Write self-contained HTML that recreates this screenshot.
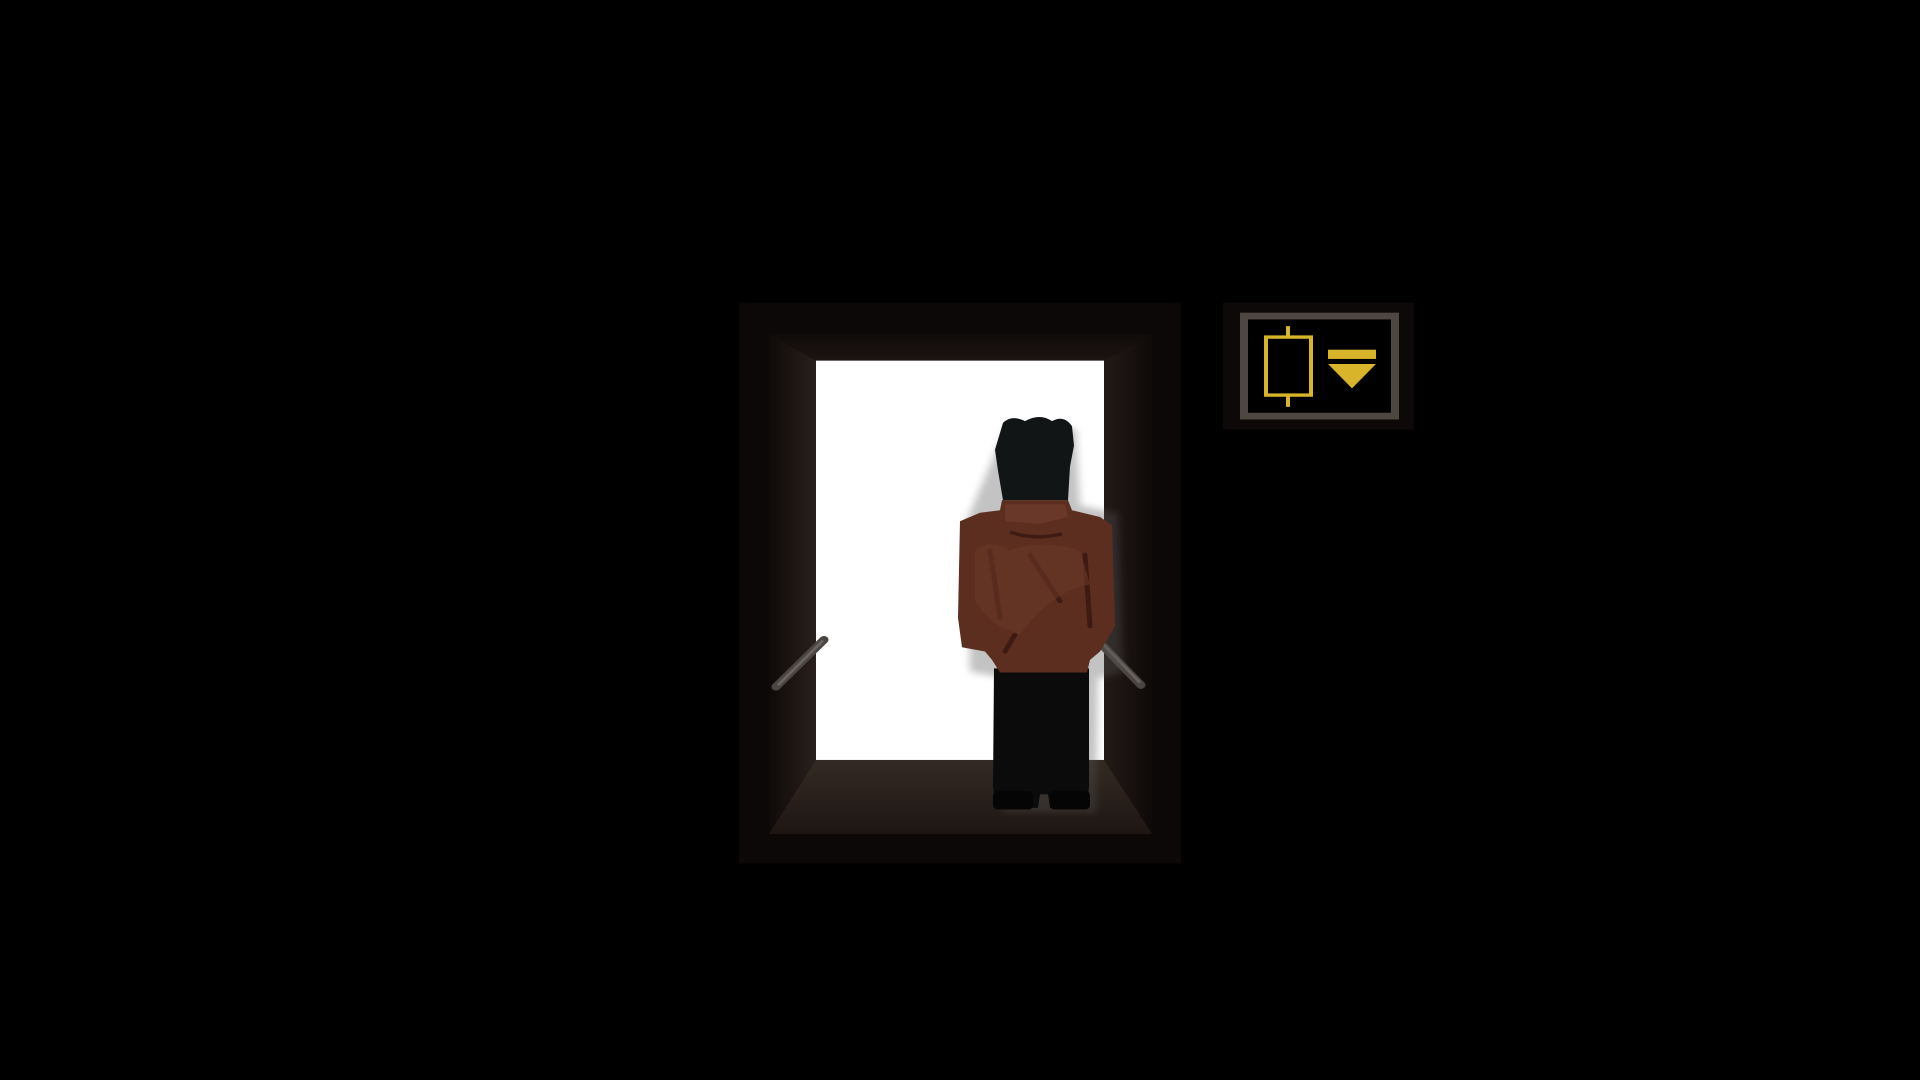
<!DOCTYPE html>
<html><head><style>html,body{margin:0;padding:0;background:#000;width:1920px;height:1080px;overflow:hidden}</style></head>
<body>
<svg width="1920" height="1080" viewBox="0 0 1920 1080" xmlns="http://www.w3.org/2000/svg" style="display:block">
<defs>
<linearGradient id="lw" x1="0" x2="1"><stop offset="0" stop-color="#0e0a09"/><stop offset="1" stop-color="#2a201c"/></linearGradient>
<linearGradient id="rw" x1="1" x2="0"><stop offset="0" stop-color="#0e0a09"/><stop offset="1" stop-color="#231a17"/></linearGradient>
<linearGradient id="fl" x1="0" y1="0" x2="0" y2="1"><stop offset="0" stop-color="#342a24"/><stop offset="1" stop-color="#1e1613"/></linearGradient>
<linearGradient id="cl" x1="0" y1="0" x2="0" y2="1"><stop offset="0" stop-color="#0f0b0a"/><stop offset="1" stop-color="#1c1411"/></linearGradient>
<filter id="sh" x="-20%" y="-20%" width="140%" height="140%"><feGaussianBlur stdDeviation="4"/></filter>
</defs>
<g transform="translate(0,290) scale(1,0.8407) translate(0,-290)">
<rect x="739" y="305" width="442" height="667" fill="#0b0807"/>
<polygon points="769,343 1152,343 1104,374 816,374" fill="url(#cl)"/>
<polygon points="769,343 816,374 816,849 769,937" fill="url(#lw)"/>
<polygon points="1152,343 1104,374 1104,849 1152,937" fill="url(#rw)"/>
<polygon points="816,849 1104,849 1152,937 769,937" fill="url(#fl)"/>
<rect x="816" y="374" width="288" height="475" fill="#fff"/>
<line x1="776" y1="762" x2="824" y2="706" stroke="#4a4542" stroke-width="9" stroke-linecap="round"/>
<line x1="778" y1="760" x2="823" y2="707" stroke="#6a6460" stroke-width="3"/>
<line x1="1097" y1="706" x2="1141" y2="760" stroke="#4a4542" stroke-width="9" stroke-linecap="round"/>
<line x1="1098" y1="705" x2="1140" y2="757" stroke="#6a6460" stroke-width="3"/>
<g filter="url(#sh)" opacity="0.35" transform="translate(8,6)">
<path d="M997,450 Q1030,438 1068,450 L1072,540 L1110,550 L1115,740 L1090,745 L1088,905 L995,905 L994,745 L962,738 L958,560 Z" fill="#555"/>
</g>
<path d="M994,740 L1089,740 L1089,880 L1087,905 L1050,906 L1048,890 L1040,890 L1038,906 L996,906 L993,880 Z" fill="#0b0b0b"/>
<rect x="993" y="886" width="40" height="22" rx="5" fill="#050505"/>
<rect x="1050" y="886" width="40" height="22" rx="5" fill="#050505"/>
<path d="M1002,540 L1068,540 L1072,552 L1100,560 L1112,570 L1115,690 L1100,720 L1090,730 L1087,745 L1000,745 L992,730 L985,720 L962,715 L958,680 L960,565 L980,555 L1000,552 Z" fill="#5b2e1f"/>
<path d="M1005,545 L1065,545 L1068,560 L1040,568 L1005,565 Z" fill="#6a3828"/>
<path d="M1010,578 Q1035,588 1062,580" stroke="#3e1b12" stroke-width="4" fill="none"/>
<path d="M990,600 L1000,680 M1030,605 L1060,660 M1085,605 L1090,690 M1015,700 L1005,720" stroke="#3e1b12" stroke-width="5" fill="none" stroke-linecap="round"/>
<path d="M975,600 Q990,585 1010,600 Q1040,585 1080,600 L1090,640 Q1050,650 1020,700 Q990,690 975,660 Z" fill="#693727" opacity="0.6"/>
<path d="M1003,448 Q1012,438 1025,446 Q1040,436 1052,446 Q1064,438 1072,452 L1074,475 L1070,500 L1068,540 L1003,540 L998,505 L995,480 Z" fill="#111516"/>
<rect x="1223" y="305" width="191" height="151" fill="#0d0908"/>
<rect x="1244" y="321" width="151" height="119" fill="#000" stroke="#4e4741" stroke-width="8"/>
<rect x="1266" y="346" width="45" height="69" fill="none" stroke="#d8b42a" stroke-width="4"/>
<line x1="1288" y1="333" x2="1288" y2="346" stroke="#d8b42a" stroke-width="4"/>
<line x1="1288" y1="415" x2="1288" y2="429" stroke="#d8b42a" stroke-width="4"/>
<rect x="1328" y="361" width="48" height="11" fill="#d8b42a"/>
<polygon points="1328,378 1376,378 1352,407" fill="#d8b42a"/>
</g>
</svg>
</body></html>
